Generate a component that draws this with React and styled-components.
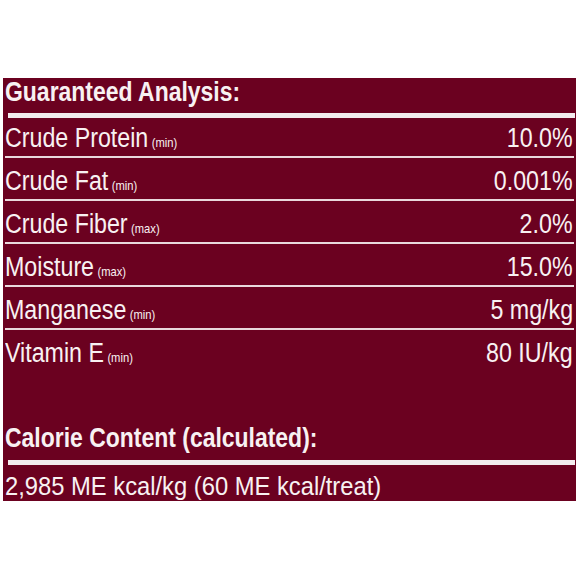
import React from 'react'
import styled, { createGlobalStyle } from 'styled-components'

const GlobalStyle = createGlobalStyle`
    body {
        margin: 0;
        background: #ffffff;
        font-family: "Liberation Sans", Arial, sans-serif;
    }
`;

const Page = styled.div`
    width: 580px;
    height: 580px;
    padding-top: 78px;
    padding-left: 3px;
    box-sizing: border-box;
`;

const Panel = styled.section`
    width: 573px;
    height: 423px;
    background: #6b0120;
    color: #f8f1f2;
    display: flex;
    flex-direction: column;
    box-sizing: border-box;
`;

// the print uses a condensed grotesque, so squeeze the text horizontally
const Squeeze = styled.span`
    display: inline-block;
    white-space: nowrap;
    transform: scaleX(${p => p.$scale || 0.86});
    transform-origin: ${p => (p.$right ? 'right' : 'left')} center;
`;

const Heading = styled.h2`
    margin: 0;
    box-sizing: border-box;
    height: ${p => (p.$h ? `${p.$h}px` : 'auto')};
    padding: ${p => p.$pt || 0}px 0 ${p => p.$pb || 0}px 2px;
    font-size: 27px;
    line-height: 26px;
    font-weight: 700;
`;

const ThickRule = styled.div`
    height: 5px;
    margin: 0 1px 0 5px;
    background: #f4ecee;
`;

const Row = styled.div`
    height: ${p => p.$h}px;
    box-sizing: border-box;
    display: flex;
    justify-content: space-between;
    align-items: flex-end;
    padding: 0 1px 3px 0;
    margin: 0 2px;
    font-size: 27px;
    line-height: 30px;
    border-bottom: 2px solid ${p => (p.$last ? 'transparent' : '#e9d8dc')};
`;

const Qualifier = styled.span`
    font-size: 13px;
    line-height: 1;
    margin-left: 4px;
`;

const Spacer = styled.div`
    flex: 1;
`;

const Calorie = styled.div`
    padding: 6px 0 0 2px;
    font-size: 25px;
    line-height: 30px;
`;

const rows = [
    { label: 'Crude Protein', q: '(min)', value: '10.0%' },
    { label: 'Crude Fat', q: '(min)', value: '0.001%' },
    { label: 'Crude Fiber', q: '(max)', value: '2.0%' },
    { label: 'Moisture', q: '(max)', value: '15.0%' },
    { label: 'Manganese', q: '(min)', value: '5 mg/kg' },
    { label: 'Vitamin E', q: '(min)', value: '80 IU/kg' },
];

const App = () => {
    return (
        <Page>
            <GlobalStyle />
            <Panel>
                <Heading $h={35} $pt={1}>
                    <Squeeze $scale={0.85}>Guaranteed Analysis:</Squeeze>
                </Heading>
                <ThickRule />
                {rows.map((r, i) => (
                    <Row key={r.label} $h={i === 0 ? 40 : 43} $last={i === rows.length - 1}>
                        <Squeeze>
                            {r.label}
                            <Qualifier>{r.q}</Qualifier>
                        </Squeeze>
                        <Squeeze $right>{r.value}</Squeeze>
                    </Row>
                ))}
                <Spacer />
                <Heading $pb={9}>
                    <Squeeze $scale={0.85}>Calorie Content (calculated):</Squeeze>
                </Heading>
                <ThickRule />
                <Calorie>
                    <Squeeze $scale={0.95}>2,985 ME kcal/kg (60 ME kcal/treat)</Squeeze>
                </Calorie>
            </Panel>
        </Page>
    )
}

export default App
